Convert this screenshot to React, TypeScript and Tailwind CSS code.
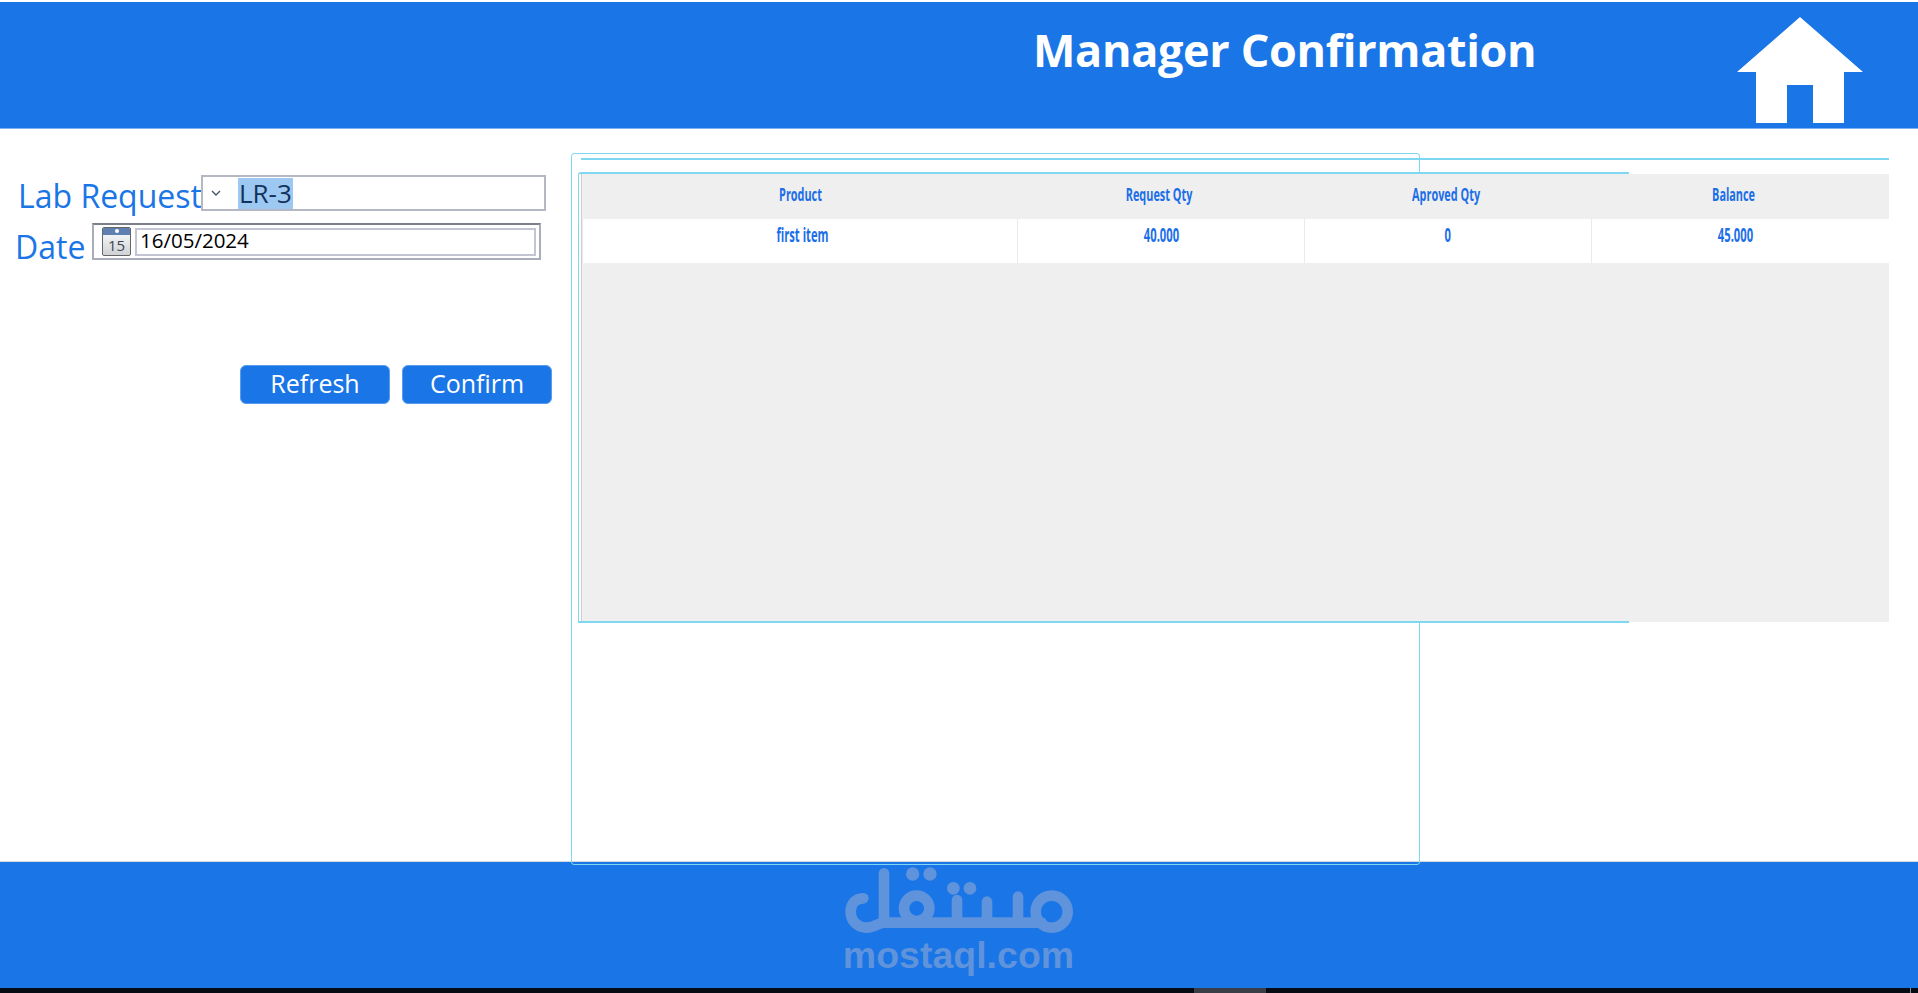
const columns = [
  { title: "Product", value: "first item", width: "w-[431px]" },
  { title: "Request Qty", value: "40.000", width: "w-[287px]" },
  { title: "Aproved Qty", value: "0", width: "w-[287px]" },
  { title: "Balance", value: "45.000", width: "w-[287px]" },
]

const Logo = () => (
  <svg viewBox="0 6 750 234" className="w-[250px] h-[78px]" fill="none" stroke="#5f93db" strokeWidth="32" strokeLinecap="round">
    <path d="M85 115 C58 115 47 135 47 155 C47 185 70 203 95 203 C120 203 130 188 147 188 L620 188" />
    <path d="M147 40 V188" />
    <circle cx="245" cy="145" r="38" />
    <path d="M366 120 V188" />
    <path d="M456 125 V188" />
    <path d="M549 110 V188" />
    <circle cx="650" cy="155" r="48" />
    <g fill="#5f93db" stroke="none">
      <circle cx="233" cy="42" r="20" />
      <circle cx="285" cy="42" r="20" />
      <circle cx="355" cy="85" r="19" />
      <circle cx="405" cy="85" r="19" />
    </g>
  </svg>
)

export default function App() {
  return (
    <div className="w-[1918px] h-[993px] overflow-hidden flex flex-col bg-white font-['Open_Sans',sans-serif]">
      <header className="mt-[2px] h-[127px] shrink-0 bg-[#1a75e6] border-b border-[#7db0f0] flex items-start">
        <h1 className="ml-[1033px] w-[704px] mt-[17px] text-[45px] tracking-[-0.35px] leading-[62px] font-bold text-white whitespace-nowrap">Manager Confirmation</h1>
        <svg viewBox="0 0 126 106" className="mt-[15px] w-[126px] h-[106px]" fill="#fff">
          <path d="M63 0 L126 55 H107 V106 H76 V68 H50 V106 H19 V55 H0 Z" />
        </svg>
      </header>

      <main className="flex-1 flex">
        <section className="w-[571px] shrink-0 pt-[46px] text-[#1a75e6]">
          <div className="flex items-start">
            <label className="ml-[18px] w-[183px] text-[32px] leading-[42px] whitespace-nowrap">Lab Request</label>
            <div className="w-[345px] h-[36px] border-2 border-[#b4b7c4] flex items-center">
              <svg viewBox="0 0 10 6" className="ml-[8px] w-[10px] h-[6px] text-[#4a5568]" fill="none" stroke="currentColor" strokeWidth="1.4">
                <path d="M1 1 L5 5 L9 1" />
              </svg>
              <span className="ml-[17px] bg-[#9cc8f2] text-[#12335c] text-[26px] leading-[31px] px-[1px]">LR-3</span>
            </div>
          </div>
          <div className="flex items-start mt-[6px]">
            <label className="ml-[15px] w-[77px] mt-[3px] text-[32px] leading-[42px]">Date</label>
            <div className="w-[449px] h-[37px] border-2 border-[#a9adb8] border-t-[#7b8088] flex items-center pl-[8px] pr-[3px] gap-[4px]">
              <div className="w-[29px] h-[29px] shrink-0 rounded-[2px] border border-[#666] bg-gradient-to-b from-[#fff] to-[#cfd2d6] flex flex-col overflow-hidden">
                <div className="h-[7px] bg-[#5f80b0] shrink-0 flex justify-center">
                  <div className="w-[4px] h-[4px] mt-[1px] rounded-full bg-white"></div>
                </div>
                <span className="text-[15px] leading-[20px] text-center text-[#3c4650]">15</span>
              </div>
              <div className="flex-1 h-[28px] border-2 border-[#c3c5d2] flex items-center pl-[3px] pb-[2px] text-black text-[20.5px]">16/05/2024</div>
            </div>
          </div>
          <div className="flex ml-[240px] mt-[97px] gap-[12px]">
            <button className="w-[150px] h-[39px] pb-[4px] rounded-[6px] bg-[#1a75e6] border border-[#5a9cf0] text-white text-[25px] leading-[32px]">Refresh</button>
            <button className="w-[150px] h-[39px] pb-[4px] rounded-[6px] bg-[#1a75e6] border border-[#5a9cf0] text-white text-[25px] leading-[32px]">Confirm</button>
          </div>
        </section>

        <section className="relative flex-1 pt-[45px] pl-[10px] pr-[29px]">
          {/* stray panel outline, sits behind the grid */}
          <div className="absolute left-0 top-[24px] w-[849px] h-[712px] border border-[#7fd8f2] rounded-[3px]"></div>

          <div className="relative h-[448px] bg-[#efefef] border-l border-[#d0d0d0] flex flex-col">
            <div className="h-[45px] flex pl-[3px]">
              {columns.map((c) => (
                <div key={c.title} className={`${c.width} pt-[9px] text-center text-[#1a6ee8] text-[17px] leading-[24px] font-bold`}>
                  <span className="inline-block scale-x-[0.64]">{c.title}</span>
                </div>
              ))}
            </div>
            <div className="h-[44px] flex bg-white pl-[4px] border-l border-[#e8e8e8]">
              {columns.map((c) => (
                <div key={c.title} className={`${c.width} pt-[2px] text-center border-r border-[#eaeaea] last:border-r-0 text-[#1a6ee8] text-[20px] leading-[28px] font-bold`}>
                  <span className="inline-block scale-x-[0.56]">{c.value}</span>
                </div>
              ))}
            </div>
          </div>

          <div className="absolute left-[10px] top-[29px] right-[29px] h-[2px] bg-[#7fd6f0]"></div>
          <div className="absolute left-[7px] top-[43px] w-[1051px] h-[451px] border-t-2 border-l border-b-2 border-[#7fd8f2] rounded-tl-[3px]"></div>
        </section>
      </main>

      <footer className="h-[127px] shrink-0 bg-[#1a75e6] border-t border-[#d5dce6] flex flex-col items-center pl-[2px]">
        <Logo />
        <span className="mt-[-4px] ml-[-3px] text-[37.5px] leading-[38px] font-bold text-[#5f93db] font-['Liberation_Sans',sans-serif]">mostaql.com</span>
      </footer>
      <div className="h-[5px] shrink-0 bg-[#060b14] flex">
        <div className="ml-[1194px] w-[72px] bg-[#3a3d45]"></div>
        <div className="ml-[644px] w-[1px] bg-[#8a8d95]"></div>
      </div>
    </div>
  )
}
